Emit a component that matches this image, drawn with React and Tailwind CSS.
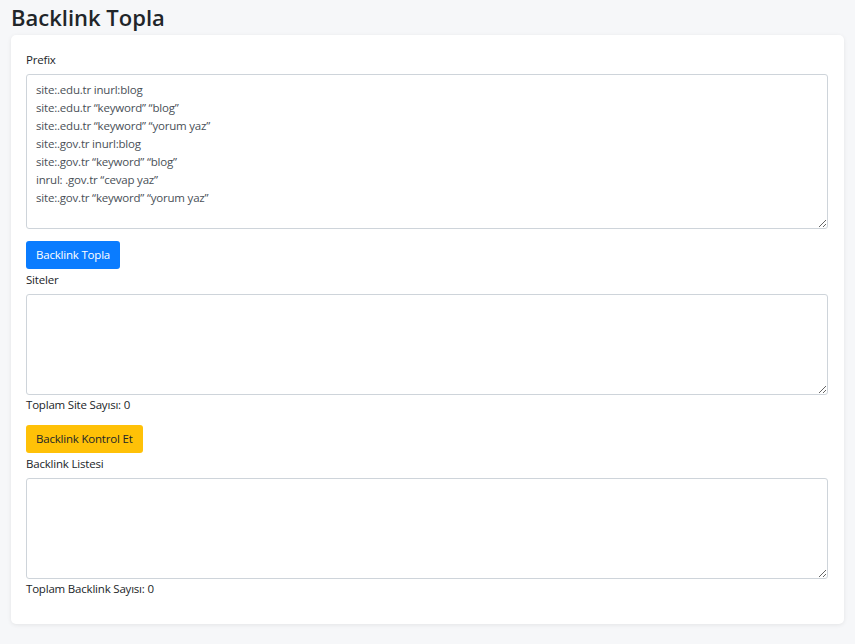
import React, { useState } from "react";

const prefixDefault = `site:.edu.tr inurl:blog
site:.edu.tr “keyword” “blog”
site:.edu.tr “keyword” “yorum yaz”
site:.gov.tr inurl:blog
site:.gov.tr “keyword” “blog”
inrul: .gov.tr “cevap yaz”
site:.gov.tr “keyword” “yorum yaz”`;

const fieldClass =
  "block w-full rounded-[3px] border border-[#ced4da] bg-white px-[9px] py-[6px] text-[11.5px] leading-[18px] tracking-[-0.2px] text-[#495057] outline-none focus:border-[#80bdff]";

const App = () => {
  const [prefix, setPrefix] = useState(prefixDefault);
  const [sites, setSites] = useState("");
  const [backlinks, setBacklinks] = useState("");

  const siteCount = sites.split("\n").filter((s) => s.trim()).length;
  const backlinkCount = backlinks.split("\n").filter((s) => s.trim()).length;

  return (
    <div
      className="min-h-[644px] bg-[#f6f7f9] px-[11px] pb-[20px] text-[11.5px] leading-[18px] tracking-[-0.2px] text-[#212529]"
      style={{ fontFamily: '"Segoe UI", "Open Sans", "Liberation Sans", sans-serif' }}
    >
      <h1 className="pt-[3px] pb-[4px] text-[22px] font-semibold leading-[28px] tracking-normal text-[#212529]">
        Backlink Topla
      </h1>

      {/* FORM CARD */}
      <div className="rounded-[5px] bg-white pl-[15px] pr-[16px] pt-[16px] pb-[26px] shadow-[0_1px_4px_rgba(0,0,0,0.08)]">
        <label className="mb-[5px] block">Prefix</label>
        <textarea
          value={prefix}
          onChange={(e) => setPrefix(e.target.value)}
          className={`${fieldClass} h-[155px]`}
        />

        <button className="mt-[12px] h-[28px] rounded-[3px] bg-[#0a7cff] px-[10px] text-[11.5px] text-white hover:bg-[#0069d9]">
          Backlink Topla
        </button>

        <label className="mt-[2px] mb-[5px] block">Siteler</label>
        <textarea
          value={sites}
          onChange={(e) => setSites(e.target.value)}
          className={`${fieldClass} h-[101px]`}
        />
        <p className="mt-[1px]">Toplam Site Sayısı: {siteCount}</p>

        <button className="mt-[11px] h-[28px] rounded-[3px] bg-[#ffc107] px-[10px] text-[11.5px] text-[#212529] hover:bg-[#e0a800]">
          Backlink Kontrol Et
        </button>

        <label className="mt-[2px] mb-[5px] block">Backlink Listesi</label>
        <textarea
          value={backlinks}
          onChange={(e) => setBacklinks(e.target.value)}
          className={`${fieldClass} h-[101px]`}
        />
        <p className="mt-[1px]">Toplam Backlink Sayısı: {backlinkCount}</p>
      </div>
    </div>
  );
};

export default App;
